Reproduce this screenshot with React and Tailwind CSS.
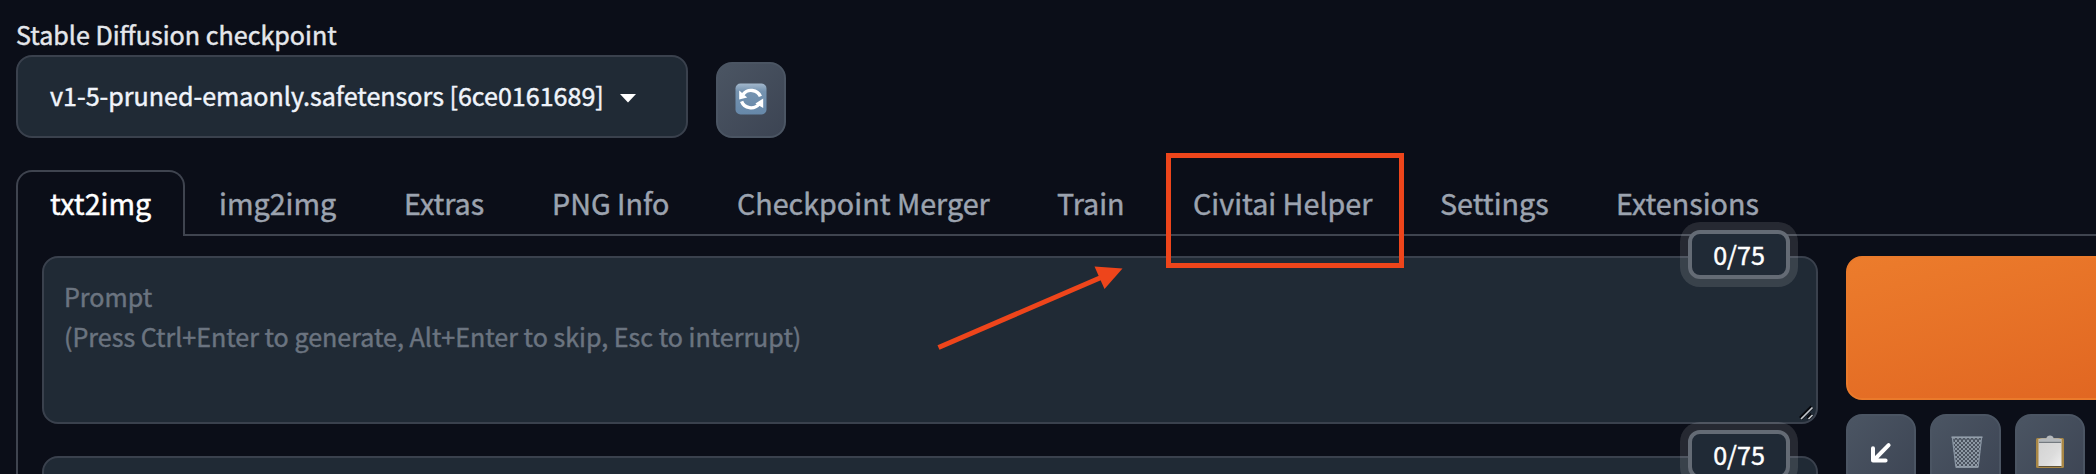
const tabs = [
  { label: "img2img", width: "w-[185px]" },
  { label: "Extras", width: "w-[148px]" },
  { label: "PNG Info", width: "w-[185px]" },
  { label: "Checkpoint Merger", width: "w-[320px]" },
  { label: "Train", width: "w-[136px]" },
  { label: "Civitai Helper", width: "w-[247px]", marked: true },
  { label: "Settings", width: "w-[176px]" },
  { label: "Extensions", width: "w-[212px]" },
];

function RefreshIcon() {
  return (
    <svg className="-mt-0.5" width="32" height="32" viewBox="0 0 32 32">
      <defs>
        <linearGradient id="tile" x1="0" y1="0" x2="0" y2="1">
          <stop offset="0" stopColor="#a3b8cc" />
          <stop offset="0.25" stopColor="#7593b0" />
          <stop offset="1" stopColor="#6688a9" />
        </linearGradient>
      </defs>
      <rect x="0.5" y="0.5" width="31" height="31" rx="5" fill="url(#tile)" />
      <path d="M8 11.4A10 9.6 0 0 1 25.4 13.4" fill="none" stroke="#fff" strokeWidth="3.4" />
      <path d="M24 21A10 9.6 0 0 1 6.6 18.4" fill="none" stroke="#fff" strokeWidth="3.4" />
      <path d="M4.2 7.4v9.2l8-2.2z" fill="#fff" />
      <path d="M28.2 15.6v9.4l-7.8-4.6z" fill="#fff" />
    </svg>
  );
}

function ArrowIcon() {
  return (
    <svg width="22" height="22" viewBox="0 0 22 22" fill="none" stroke="#fff" strokeWidth="4" strokeLinecap="round" strokeLinejoin="round">
      <path d="M18.6 3.2 4 18M3 6.2V18.6H15.6" />
    </svg>
  );
}

function BasketIcon() {
  return (
    <svg width="34" height="34" viewBox="0 0 34 34">
      <defs>
        <pattern id="mesh" width="4" height="4" patternUnits="userSpaceOnUse">
          <path d="M0 0l4 4M4 0L0 4" stroke="#8d98a4" strokeWidth="1" />
        </pattern>
      </defs>
      <path d="M2 2h30l-3.6 30H5.6z" fill="#4b535f" />
      <path d="M2 2h30l-3.6 30H5.6z" fill="url(#mesh)" />
      <path d="M2.4 2.4 5.8 31.5M31.6 2.4 28.2 31.5" stroke="#8894a2" strokeWidth="1.2" />
      <path d="M1.5 2.2h31" stroke="#939eaa" strokeWidth="1.6" />
      <path d="M3 4.4h28" stroke="#59626e" strokeWidth="1.2" />
      <path d="M5.6 32h22.8" stroke="#9aa5b1" strokeWidth="1.6" />
    </svg>
  );
}

function ClipboardIcon() {
  return (
    <svg width="30" height="34" viewBox="0 0 30 34">
      <defs>
        <linearGradient id="paper" x1="0" y1="0" x2="1" y2="1">
          <stop offset="0" stopColor="#d2d2d2" />
          <stop offset="0.6" stopColor="#dcdcdc" />
          <stop offset="1" stopColor="#f0f0f0" />
        </linearGradient>
      </defs>
      <rect x="1" y="3" width="28" height="30" rx="1.5" fill="#a98745" />
      <path d="M3.5 4h23v27.5h-23z" fill="url(#paper)" />
      <path d="M3.5 31.5h23" stroke="#5f5339" strokeWidth="1" />
      <path d="M4 7.4V5.2Q4 3.4 7 3.2h4.4Q12 .6 15 .6t3.6 2.6H23q3 .2 3 2v2.2z" fill="#b4b8bc" />
      <path d="M4 7.4h22" stroke="#747a80" strokeWidth="1.2" />
    </svg>
  );
}

function ToolButton({ className, children }) {
  return (
    <button className={`flex shrink-0 justify-center rounded-2xl border-2 border-[#4b5563] bg-linear-to-br from-[#4b5563] to-[#3c4453] ${className}`}>
      {children}
    </button>
  );
}

function Counter() {
  return (
    <div className="absolute -top-[28px] right-[26px] flex h-[49px] w-[102px] items-center justify-center rounded-xl border-4 border-[#646b75] bg-[#202a36] pb-0.5 text-[25.1px] text-white shadow-[0_0_0_8px_rgba(255,255,255,0.115)]">
      0/75
    </div>
  );
}

function PromptBox({ children }) {
  return (
    <div className="relative h-[168px] w-[1776px] shrink-0 rounded-2xl border-2 border-[#3a414d] bg-[#202a35] px-5 pt-[18px] text-[25.07px] leading-10 text-[#6b7480]">
      {children}
      <Counter />
      <svg className="absolute right-px bottom-px" width="16" height="16" viewBox="0 0 16 16">
        <path d="M1.5 13.5 13 2M9 13.5l4-4" stroke="#05070c" strokeWidth="4" />
        <path d="M2 14 13.5 2.5M9.5 14l4-4" stroke="#c3c7cc" strokeWidth="1.7" />
      </svg>
    </div>
  );
}

export default function App() {
  return (
    <div className="h-[474px] w-[2096px] overflow-hidden bg-[#0b0e18] pl-4 font-['Noto_Sans_CJK_SC','Source_Sans_Pro',sans-serif] whitespace-nowrap [-webkit-text-stroke:0.45px_currentColor]">
      <div className="flex h-[138px] items-end gap-7">
        <div className="w-[672px]">
          <div className="h-[42px] text-[25.1px] leading-[42px] text-[#e5e7eb]">Stable Diffusion checkpoint</div>
          <div className="flex h-[83px] items-center gap-4 rounded-2xl border-2 border-[#3a414d] bg-[#202a35] pb-px pl-8 text-[25.07px] text-[#f0f4fb]">
            <span>v1-5-pruned-emaonly.safetensors [6ce0161689]</span>
            <svg className="mt-[5px]" width="16" height="9" viewBox="0 0 16 9"><path d="M0 0h16L8 8.6z" fill="#fff" /></svg>
          </div>
        </div>
        <ToolButton className="h-[76px] w-[70px] items-center">
          <RefreshIcon />
        </ToolButton>
      </div>

      <nav className="mt-8 flex h-[66px] text-[28.7px] leading-[62px] text-[#9ca3af]">
        <div className="w-[169px] rounded-t-2xl border-2 border-b-0 border-[#3f444f] pl-8 text-white">txt2img</div>
        {tabs.map((tab) => (
          <div key={tab.label} className={`relative border-b-2 border-[#3f444f] pt-0.5 pl-[34px] ${tab.width}`}>
            {tab.label}
            {tab.marked && <span className="absolute -top-[17px] left-[7px] z-10 h-[115px] w-[238px] border-[5px] border-[#ee451b]" />}
          </div>
        ))}
        <div className="grow border-b-2 border-[#3f444f]" />
      </nav>

      <main className="relative flex h-[300px] gap-7 border-l-2 border-[#3f444f] pt-5 pl-6">
        <div className="flex shrink-0 flex-col gap-8">
          <PromptBox>
            <p>Prompt</p>
            <p>(Press Ctrl+Enter to generate, Alt+Enter to skip, Esc to interrupt)</p>
          </PromptBox>
          <PromptBox />
        </div>
        <div className="flex w-[520px] shrink-0 flex-col gap-3.5">
          <button className="h-[144px] shrink-0 rounded-2xl border-2 border-[#ea7a2b] bg-linear-to-br from-[#ec7c2c] to-[#dd5f1e]" />
          <div className="flex gap-3.5">
            <ToolButton className="h-20 w-[70px] items-start pt-[26px]"><ArrowIcon /></ToolButton>
            <ToolButton className="h-20 w-[71px] items-start pt-[19px] pl-0.5"><BasketIcon /></ToolButton>
            <ToolButton className="h-20 w-[70px] items-start pt-[19px]"><ClipboardIcon /></ToolButton>
          </div>
        </div>
        <svg className="absolute top-[24px] left-[911px]" width="200" height="100" viewBox="0 0 200 100">
          <path d="M9.5 87.5 172 17.5" stroke="#ee451b" strokeWidth="5" />
          <path d="M193.5 8.5 165.5 6.5 175.5 29z" fill="#ee451b" />
        </svg>
      </main>
    </div>
  );
}
